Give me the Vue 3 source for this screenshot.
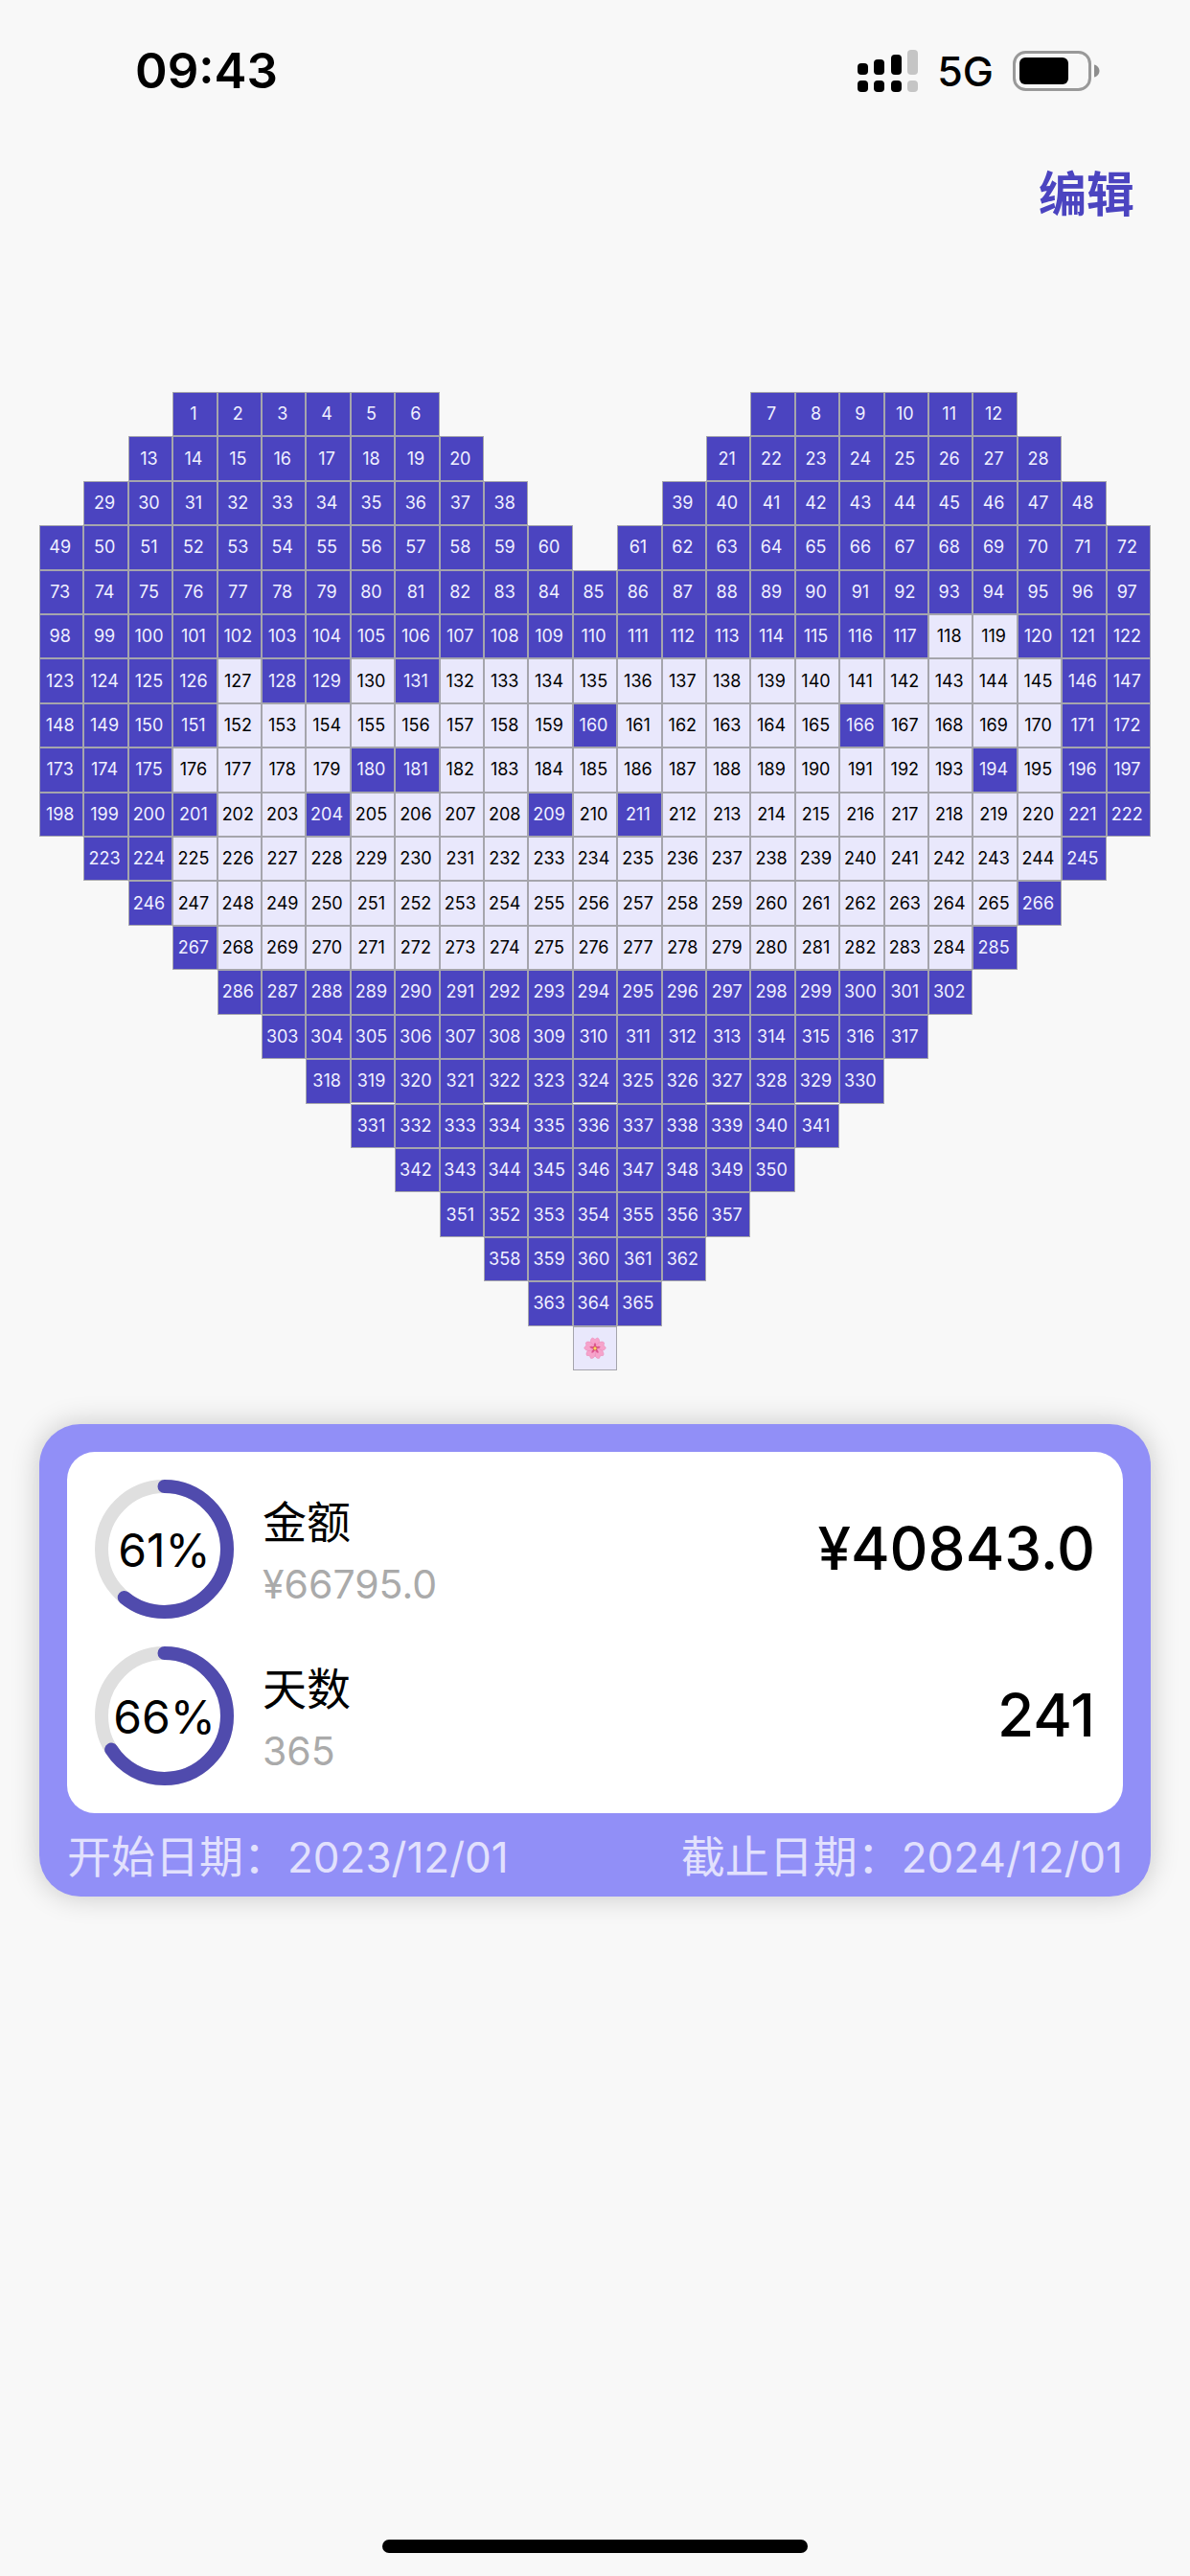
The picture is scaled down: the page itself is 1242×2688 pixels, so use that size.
<script setup>
import { ref, computed } from 'vue'

// Each row is a list of [first column, number of cells] runs.
const shape = [
  [[4, 6], [17, 6]],
  [[3, 8], [16, 8]],
  [[2, 10], [15, 10]],
  [[1, 12], [14, 12]],
  [[1, 25]],
  [[1, 25]],
  [[1, 25]],
  [[1, 25]],
  [[1, 25]],
  [[1, 25]],
  [[2, 23]],
  [[3, 21]],
  [[4, 19]],
  [[5, 17]],
  [[6, 15]],
  [[7, 13]],
  [[8, 11]],
  [[9, 9]],
  [[10, 7]],
  [[11, 5]],
  [[12, 3]],
]

// Days that have not been saved yet, as inclusive ranges.
const openRanges = [
  [118, 119], [127, 127], [130, 130], [132, 145], [152, 159], [161, 165],
  [167, 170], [176, 179], [182, 193], [195, 195], [202, 203], [205, 208],
  [210, 210], [212, 220], [225, 244], [247, 265], [268, 284],
]

const open = ref(new Set(openRanges.flatMap(([a, b]) =>
  Array.from({ length: b - a + 1 }, (_, i) => a + i))))

const cells = []
shape.forEach((runs, r) => {
  runs.forEach(([start, count]) => {
    for (let i = 0; i < count; i++) {
      cells.push({ day: cells.length + 1, row: r + 1, col: start + i })
    }
  })
})

const savedDays = computed(() => cells.length - open.value.size)

const stats = computed(() => [
  { label: '金额', total: '¥66795.0', value: '¥40843.0', percent: 61 },
  {
    label: '天数',
    total: String(cells.length),
    value: String(savedDays.value),
    percent: Math.round((savedDays.value / cells.length) * 100),
  },
])

function toggle(day) {
  if (open.value.has(day)) open.value.delete(day)
  else open.value.add(day)
}
</script>

<template>
  <div class="screen">
    <header class="status">
      <span class="time">09:43</span>
      <div class="indicators">
        <svg class="signal" viewBox="0 0 63 44" aria-hidden="true">
          <rect x="0" y="14" width="11" height="12" rx="4" />
          <rect x="17" y="10" width="11" height="16" rx="4" />
          <rect x="35" y="5" width="11" height="21" rx="4" />
          <rect x="52" y="0" width="11" height="26" rx="4" fill="#c5c5c5" />
          <rect x="0" y="32" width="11" height="12" rx="4" />
          <rect x="17" y="32" width="11" height="12" rx="4" />
          <rect x="35" y="32" width="11" height="12" rx="4" />
          <rect x="52" y="32" width="11" height="12" rx="4" fill="#c5c5c5" />
        </svg>
        <span class="network">5G</span>
        <svg class="battery" viewBox="0 0 92 42" aria-hidden="true">
          <rect x="1.5" y="1.5" width="79" height="39" rx="12" fill="none" stroke="#999" stroke-width="3" />
          <rect x="7" y="7" width="51" height="28" rx="6" />
          <path d="M85 14.500C88 15 90.500 18 90.500 21S88 27 85 27.500Z" fill="#8e8e8e" />
        </svg>
      </div>
    </header>

    <nav class="toolbar">
      <button type="button" class="edit">编辑</button>
    </nav>

    <main class="content">
      <div class="heart">
        <button
          v-for="c in cells"
          :key="c.day"
          type="button"
          class="cell"
          :class="{ saved: !open.has(c.day) }"
          :aria-pressed="!open.has(c.day)"
          :style="{ gridRow: c.row, gridColumn: c.col }"
          @click="toggle(c.day)"
        >{{ c.day }}</button>
        <div class="cell tip">
          <svg class="flower" viewBox="-12 -12 24 24" aria-hidden="true">
            <g v-for="n in 5" :key="n" :transform="`rotate(${(n - 1) * 72})`">
              <path d="M0 0C-6 -4 -5.500 -10 -2.500 -11L0 -9.500L2.500 -11C5.500 -10 6 -4 0 0Z" fill="#f6a3cb" stroke="#ea86b6" stroke-width=".5" />
              <path d="M0 0C-2 -3 -1 -5 0 -6C1 -5 2 -3 0 0Z" fill="#dd5590" />
            </g>
            <circle r="2.400" fill="#c8415f" />
            <circle r="1.700" fill="#fbd75b" />
          </svg>
        </div>
      </div>

      <section class="card">
        <div class="stats">
          <div v-for="s in stats" :key="s.label" class="stat">
            <div class="ring">
              <svg viewBox="0 0 145 145" aria-hidden="true">
                <circle class="track" cx="72.5" cy="72.5" r="65.5" />
                <circle
                  class="bar"
                  cx="72.5"
                  cy="72.5"
                  r="65.5"
                  pathLength="100"
                  :stroke-dasharray="`${s.percent} 100`"
                  transform="rotate(-90 72.5 72.5)"
                />
              </svg>
              <span class="percent">{{ s.percent }}%</span>
            </div>
            <div class="names">
              <span class="label">{{ s.label }}</span>
              <span class="total">{{ s.total }}</span>
            </div>
            <strong class="value">{{ s.value }}</strong>
          </div>
        </div>
        <footer class="dates">
          <span>开始日期：<time datetime="2023-12-01">2023/12/01</time></span>
          <span>截止日期：<time datetime="2024-12-01">2024/12/01</time></span>
        </footer>
      </section>
    </main>

    <div class="home"></div>
  </div>
</template>

<style>
body {
  background: #f8f8f8;
}
</style>

<style scoped>
.screen {
  box-sizing: border-box;
  min-height: 100vh;
  display: flex;
  flex-direction: column;
  background: #f8f8f8;
  color: #000;
  font-family: Inter, "Noto Sans CJK SC", sans-serif;
}

button {
  margin: 0;
  padding: 0;
  border: 0;
  background: none;
  font: inherit;
  cursor: pointer;
}

.status {
  display: flex;
  align-items: center;
  justify-content: space-between;
  height: 148px;
  padding: 0 93px 0 141px;
}

.time {
  font-size: 51px;
  line-height: 60px;
  font-weight: 600;
}

.indicators {
  display: flex;
  align-items: center;
}

.signal {
  width: 63px;
  height: 44px;
}

.network {
  margin: 0 20px;
  font-size: 43px;
  line-height: 50px;
  font-weight: 500;
}

.battery {
  width: 92px;
  height: 42px;
}

.toolbar {
  display: flex;
  justify-content: flex-end;
  padding: 19px 58px 0 0;
}

.edit {
  color: #4b44c0;
  font-size: 50px;
  line-height: 72px;
  font-weight: 700;
}

.content {
  padding: 170px 41px 60px;
}

.heart {
  display: grid;
  grid-template-columns: repeat(25, 1fr);
}

.cell {
  box-sizing: border-box;
  display: flex;
  align-items: center;
  justify-content: center;
  aspect-ratio: 1;
  min-width: 0;
  padding-right: 3px;
  border: 1px solid #a5a5ac;
  background: #e9e8fc;
  color: #000;
  font-size: 18px;
  line-height: 22px;
}

.cell.saved {
  background: #4b44c0;
  color: #f0f0ff;
}

.cell.tip {
  grid-row: 22;
  grid-column: 13;
  padding: 0;
}

.flower {
  width: 24px;
  height: 24px;
}

.card {
  margin-top: 56px;
  padding: 29px 29px 0;
  border-radius: 43px;
  background: #918ff7;
  box-shadow: 0 0 30px rgba(0, 0, 0, 0.2);
}

.stats {
  display: flex;
  flex-direction: column;
  gap: 29px;
  padding: 29px;
  border-radius: 29px;
  background: #fff;
}

.stat {
  display: flex;
  align-items: center;
}

.ring {
  display: grid;
  place-items: center;
  width: 145px;
  height: 145px;
}

.ring > * {
  grid-area: 1 / 1;
}

.ring svg {
  width: 100%;
  height: 100%;
}

.track,
.bar {
  fill: none;
  stroke: #dfdfdf;
  stroke-width: 14;
}

.bar {
  stroke: #504bad;
  stroke-linecap: round;
}

.percent {
  padding-top: 4px;
  font-size: 48px;
  line-height: 58px;
}

.names {
  display: flex;
  flex-direction: column;
  flex: 1;
  gap: 8px;
  padding: 8px 0 0 30px;
}

.label {
  font-size: 46px;
  line-height: 58px;
}

.total {
  color: #aaa;
  font-size: 41px;
  line-height: 56px;
}

.value {
  font-size: 62px;
  line-height: 76px;
  font-weight: 500;
}

.dates {
  box-sizing: border-box;
  display: flex;
  align-items: center;
  justify-content: space-between;
  height: 87px;
  padding-top: 4px;
  color: #e2e1fd;
  font-size: 46px;
  line-height: 58px;
}

.dates time {
  font-size: 44px;
}

.home {
  width: 444px;
  height: 14px;
  margin: auto auto 24px;
  border-radius: 7px;
  background: #000;
}
</style>
